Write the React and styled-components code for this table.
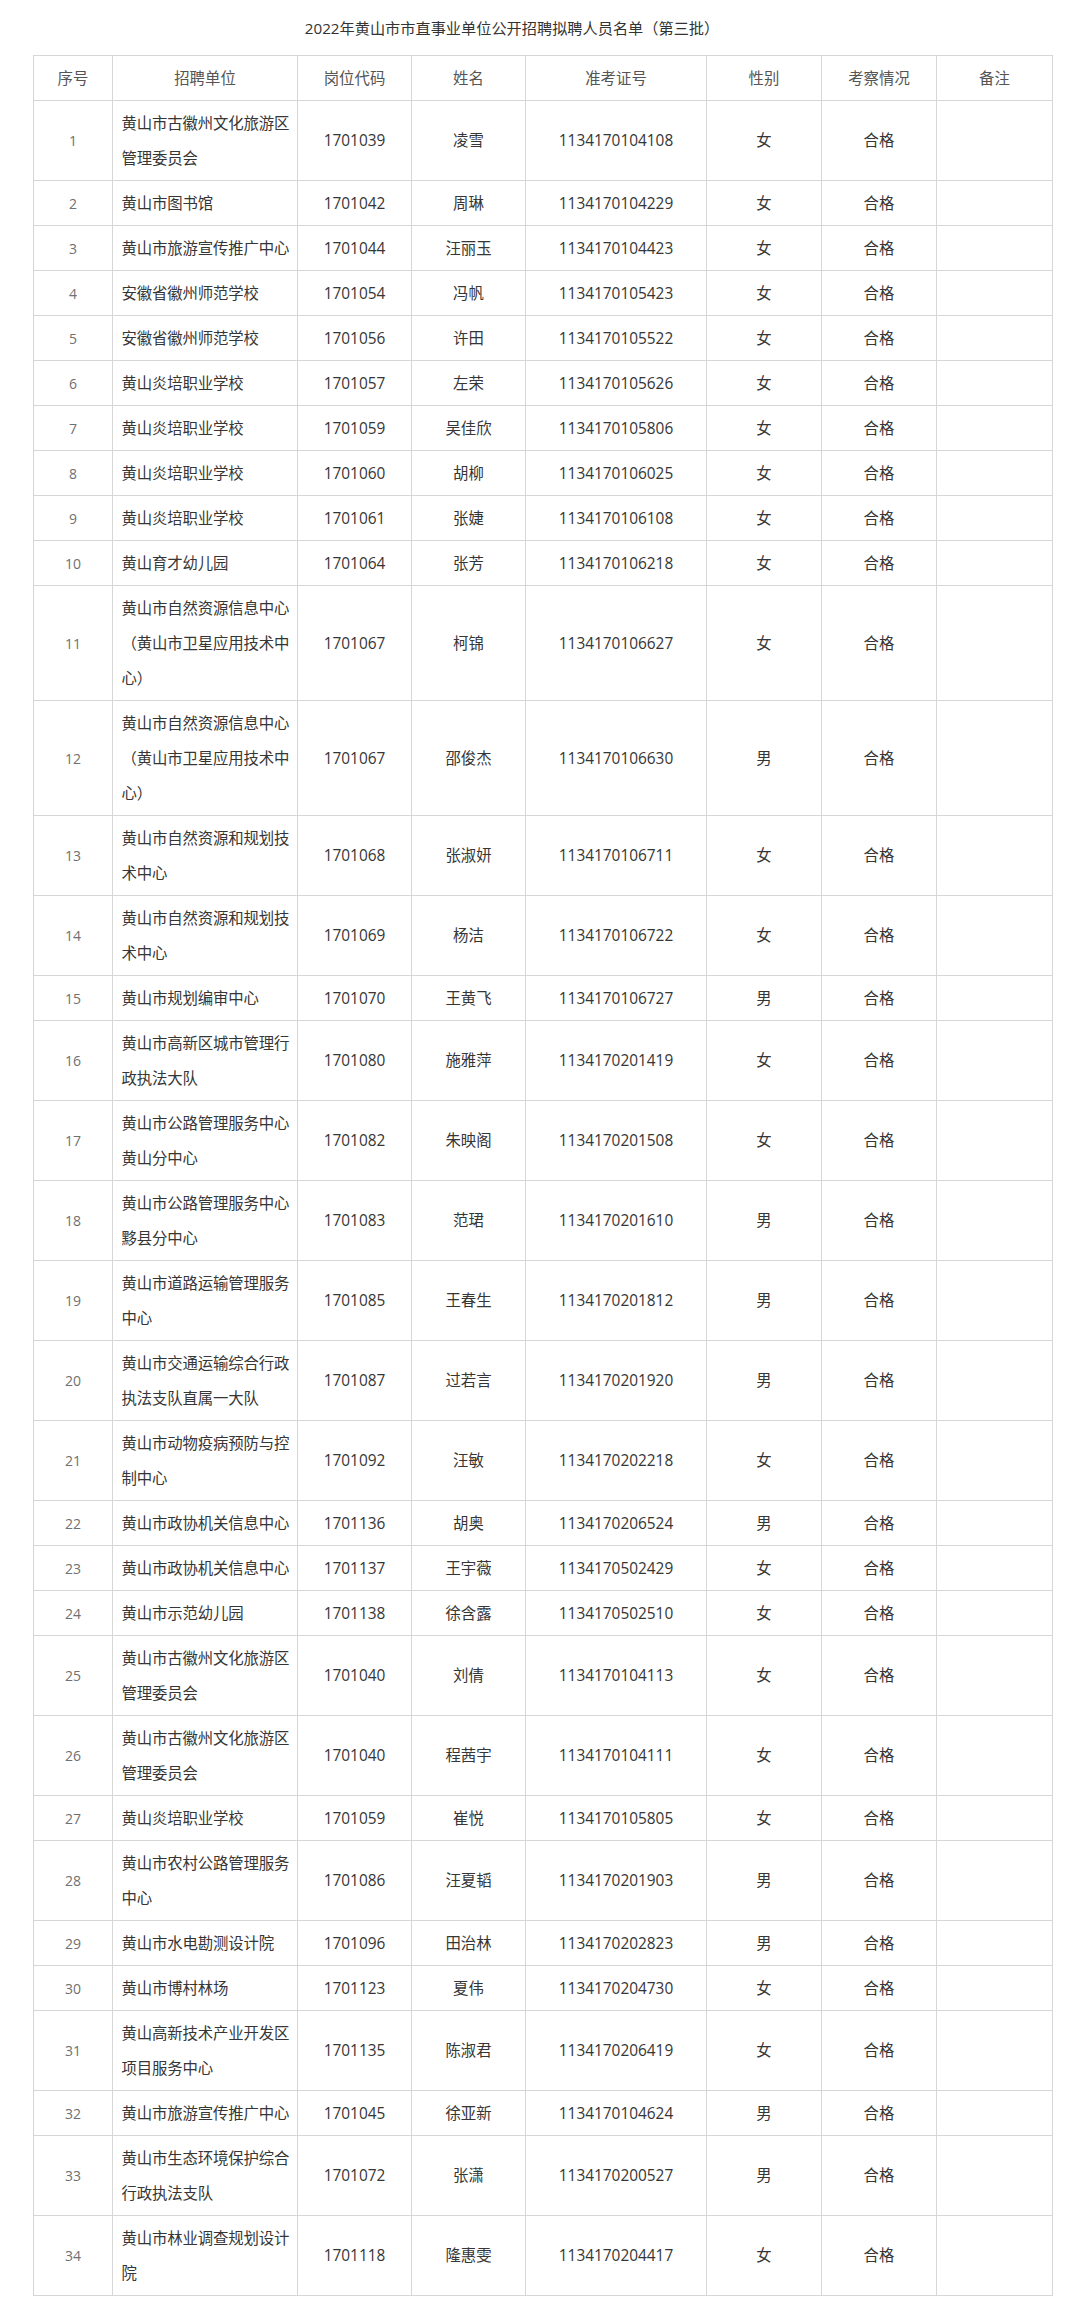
import React from 'react'
import styled, { createGlobalStyle } from 'styled-components'

const GlobalStyle = createGlobalStyle`
  body {
    margin: 0;
    background: #fff;
    font-family: "Open Sans", "Noto Sans CJK SC", sans-serif;
  }
`

const Page = styled.div`
  padding: 0 0 13px 33px;
  width: 1019px;
`

const Title = styled.div`
  padding: 18px 61px 0 0;
  height: 55px;
  box-sizing: border-box;
  line-height: 20px;
  font-size: 15.2px;
  color: #333;
  text-align: center;
`

const Table = styled.table`
  width: 1019px;
  table-layout: fixed;
  border-collapse: collapse;
  font-size: 15.4px;
  color: #363636;
`

const Cell = styled.td`
  border: 1px solid #d6d6d6;
  padding: 4.5px ${p => (p.$left ? '4px 4.5px 8.5px' : '0')};
  line-height: 35px;
  text-align: ${p => (p.$left ? 'left' : 'center')};
  vertical-align: middle;
  white-space: pre;
  overflow: hidden;
  color: ${p => (p.$dim ? '#707070' : 'inherit')};
  font-size: ${p => (p.$dim ? '14px' : '15.4px')};
  letter-spacing: ${p => (p.$left ? '-0.13px' : '0')};
`

const Head = styled(Cell).attrs({ as: 'th' })`
  font-weight: normal;
  color: #555;
`

const widths = [79, 185, 114, 114, 181, 115, 115, 116]
const heads = ['序号', '招聘单位', '岗位代码', '姓名', '准考证号', '性别', '考察情况', '备注']

const guhui = '黄山市古徽州文化旅游区\n管理委员会'
const ziran = '黄山市自然资源信息中心\n（黄山市卫星应用技术中\n心）'
const guihua = '黄山市自然资源和规划技\n术中心'

const rows = [
  [guhui, '1701039', '凌雪', '1134170104108', '女'],
  ['黄山市图书馆', '1701042', '周琳', '1134170104229', '女'],
  ['黄山市旅游宣传推广中心', '1701044', '汪丽玉', '1134170104423', '女'],
  ['安徽省徽州师范学校', '1701054', '冯帆', '1134170105423', '女'],
  ['安徽省徽州师范学校', '1701056', '许田', '1134170105522', '女'],
  ['黄山炎培职业学校', '1701057', '左荣', '1134170105626', '女'],
  ['黄山炎培职业学校', '1701059', '吴佳欣', '1134170105806', '女'],
  ['黄山炎培职业学校', '1701060', '胡柳', '1134170106025', '女'],
  ['黄山炎培职业学校', '1701061', '张婕', '1134170106108', '女'],
  ['黄山育才幼儿园', '1701064', '张芳', '1134170106218', '女'],
  [ziran, '1701067', '柯锦', '1134170106627', '女'],
  [ziran, '1701067', '邵俊杰', '1134170106630', '男'],
  [guihua, '1701068', '张淑妍', '1134170106711', '女'],
  [guihua, '1701069', '杨洁', '1134170106722', '女'],
  ['黄山市规划编审中心', '1701070', '王黄飞', '1134170106727', '男'],
  ['黄山市高新区城市管理行\n政执法大队', '1701080', '施雅萍', '1134170201419', '女'],
  ['黄山市公路管理服务中心\n黄山分中心', '1701082', '朱映阁', '1134170201508', '女'],
  ['黄山市公路管理服务中心\n黟县分中心', '1701083', '范珺', '1134170201610', '男'],
  ['黄山市道路运输管理服务\n中心', '1701085', '王春生', '1134170201812', '男'],
  ['黄山市交通运输综合行政\n执法支队直属一大队', '1701087', '过若言', '1134170201920', '男'],
  ['黄山市动物疫病预防与控\n制中心', '1701092', '汪敏', '1134170202218', '女'],
  ['黄山市政协机关信息中心', '1701136', '胡奥', '1134170206524', '男'],
  ['黄山市政协机关信息中心', '1701137', '王宇薇', '1134170502429', '女'],
  ['黄山市示范幼儿园', '1701138', '徐含露', '1134170502510', '女'],
  [guhui, '1701040', '刘倩', '1134170104113', '女'],
  [guhui, '1701040', '程茜宇', '1134170104111', '女'],
  ['黄山炎培职业学校', '1701059', '崔悦', '1134170105805', '女'],
  ['黄山市农村公路管理服务\n中心', '1701086', '汪夏韬', '1134170201903', '男'],
  ['黄山市水电勘测设计院', '1701096', '田治林', '1134170202823', '男'],
  ['黄山市博村林场', '1701123', '夏伟', '1134170204730', '女'],
  ['黄山高新技术产业开发区\n项目服务中心', '1701135', '陈淑君', '1134170206419', '女'],
  ['黄山市旅游宣传推广中心', '1701045', '徐亚新', '1134170104624', '男'],
  ['黄山市生态环境保护综合\n行政执法支队', '1701072', '张潇', '1134170200527', '男'],
  ['黄山市林业调查规划设计\n院', '1701118', '隆惠雯', '1134170204417', '女'],
]

export default function App() {
  return (
    <Page>
      <GlobalStyle />
      <Title>2022年黄山市市直事业单位公开招聘拟聘人员名单（第三批）</Title>
      <Table>
        <colgroup>
          {widths.map((w, i) => (
            <col key={i} style={{ width: w }} />
          ))}
        </colgroup>
        <thead>
          <tr>
            {heads.map(h => (
              <Head key={h}>{h}</Head>
            ))}
          </tr>
        </thead>
        <tbody>
          {rows.map(([unit, code, name, ticket, sex], i) => (
            <tr key={i}>
              <Cell $dim>{i + 1}</Cell>
              <Cell $left>{unit}</Cell>
              <Cell>{code}</Cell>
              <Cell>{name}</Cell>
              <Cell>{ticket}</Cell>
              <Cell>{sex}</Cell>
              <Cell>合格</Cell>
              <Cell />
            </tr>
          ))}
        </tbody>
      </Table>
    </Page>
  )
}
